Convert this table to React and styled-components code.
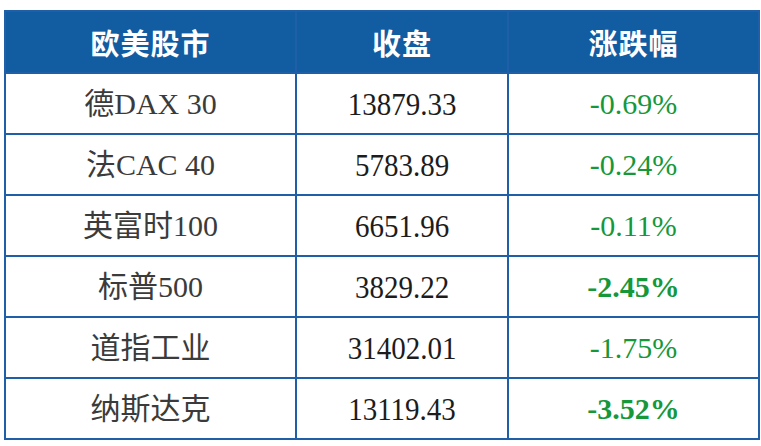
import React from "react";
import styled, { createGlobalStyle } from "styled-components";

const rows = [
    { name: "德DAX 30", close: "13879.33", change: "-0.69%", strong: false },
    { name: "法CAC 40", close: "5783.89", change: "-0.24%", strong: false },
    { name: "英富时100", close: "6651.96", change: "-0.11%", strong: false },
    { name: "标普500", close: "3829.22", change: "-2.45%", strong: true },
    { name: "道指工业", close: "31402.01", change: "-1.75%", strong: false },
    { name: "纳斯达克", close: "13119.43", change: "-3.52%", strong: true },
];

const App = () => {
    return (
        <>
            <GlobalStyle />
            <Page>
                <Table>
                    <colgroup>
                        <col style={{ width: 291 }} />
                        <col style={{ width: 212 }} />
                        <col style={{ width: 251 }} />
                    </colgroup>
                    <thead>
                        <tr>
                            <HeadCell>欧美股市</HeadCell>
                            <HeadCell>收盘</HeadCell>
                            <HeadCell>涨跌幅</HeadCell>
                        </tr>
                    </thead>
                    <tbody>
                        {rows.map((row) => (
                            <tr key={row.name}>
                                <NameCell>{row.name}</NameCell>
                                <CloseCell><Stretch>{row.close}</Stretch></CloseCell>
                                <ChangeCell $strong={row.strong}>{row.change}</ChangeCell>
                            </tr>
                        ))}
                    </tbody>
                </Table>
            </Page>
        </>
    );
};

//Styles
const GlobalStyle = createGlobalStyle`
    body {
        margin: 0;
        background: #fff;
    }
`;
const Page = styled.div`
    padding: 10px 0 0 4px;
`;
const Table = styled.table`
    border-collapse: collapse;
    table-layout: fixed;
    width: 754px;
    font-family: "Liberation Serif", "Noto Sans CJK SC", serif;
    td, th {
        border: 2px solid #1f5fa7;
        text-align: center;
        padding: 0;
        box-sizing: border-box;
    }
`;
const HeadCell = styled.th`
    height: 62px;
    background: #125ca2;
    color: #fff;
    font-family: "Noto Sans CJK SC", sans-serif;
    font-weight: 700;
    font-size: 29px;
    line-height: 30px;
    letter-spacing: 1px;
`;
const Cell = styled.td`
    height: 61px;
    font-size: 30px;
    line-height: 30px;
`;
const NameCell = styled(Cell)`
    color: #3b3b3b;
`;
const CloseCell = styled(Cell)`
    color: #1c1c1c;
    font-size: 29px;
`;
const Stretch = styled.span`
    display: inline-block;
    transform: scaleY(1.12);
`;
const ChangeCell = styled(Cell)`
    color: #16983a;
    font-weight: ${(p) => (p.$strong ? 700 : 400)};
`;

export default App;
